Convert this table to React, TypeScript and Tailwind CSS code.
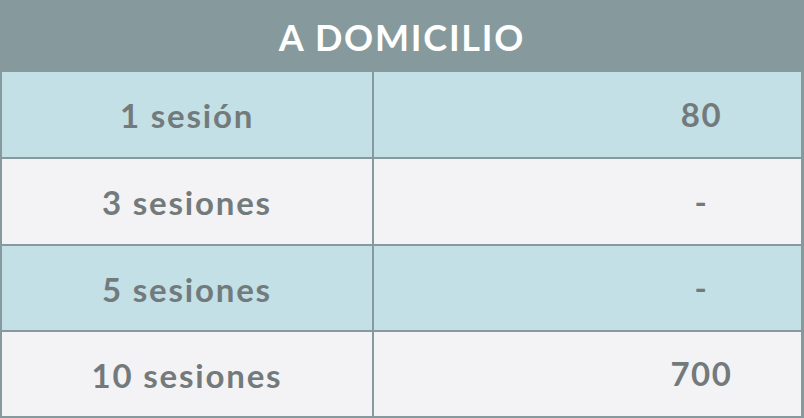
const rows = [
  { label: '1 sesión', value: '80', bg: 'bg-[#c2e0e6]', h: 'h-[85px]' },
  { label: '3 sesiones', value: '-', bg: 'bg-[#f3f3f5]', h: 'h-[85px]' },
  { label: '5 sesiones', value: '-', bg: 'bg-[#c2e0e6]', h: 'h-[84px]' },
  { label: '10 sesiones', value: '700', bg: 'bg-[#f3f3f5]', h: 'h-[84px]' },
]

export default function App() {
  return (
    <div className="w-[804px] h-[418px] bg-[#869a9d] font-['Lato',sans-serif] font-bold">
      <div className="h-[72px] flex items-center justify-center text-white text-[36px] tracking-[1.8px] pt-[2px]">
        A DOMICILIO
      </div>
      <div className="ml-[2px] mr-[3px] flex flex-col gap-[2px]">
        {rows.map(r => (
          <div key={r.label} className={`grid grid-cols-[370px_1fr] gap-[2px] ${r.h}`}>
            <div className={`${r.bg} flex items-center justify-center text-[33px] tracking-[1.8px] text-[#737a7b] pt-[3px]`}>
              {r.label}
            </div>
            <div className={`${r.bg} flex items-center justify-center pl-[228px] text-[33px] tracking-[1.6px] text-[#737a7b]`}>
              {r.value}
            </div>
          </div>
        ))}
      </div>
    </div>
  )
}
